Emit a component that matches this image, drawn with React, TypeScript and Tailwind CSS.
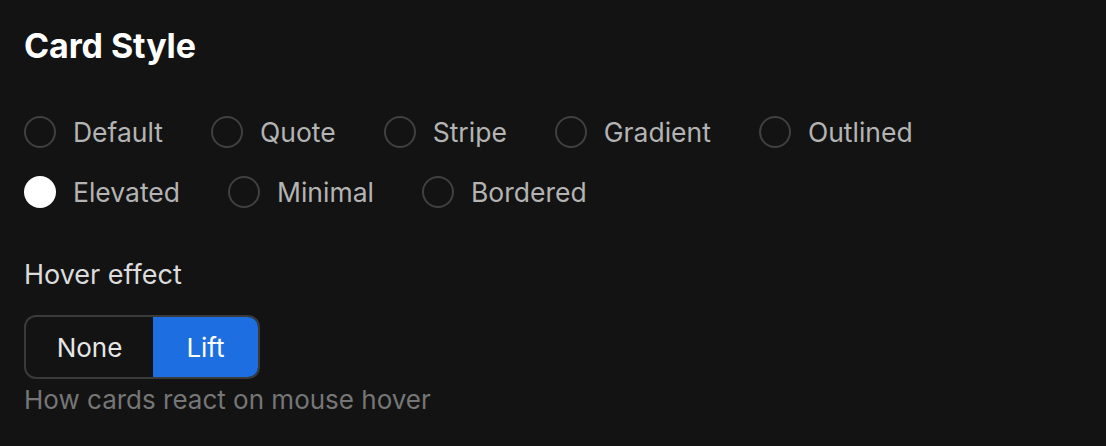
import React, { useState } from "react";

const options = ["Default", "Quote", "Stripe", "Gradient", "Outlined", "Elevated", "Minimal", "Bordered"];

export default function App() {
  const [selected, setSelected] = useState("Elevated");
  const [hover, setHover] = useState("Lift");
  return (
    <div
      className="min-h-[446px] w-full bg-[#131313] px-6 pt-[26px]"
      style={{ fontFamily: "Inter, 'Open Sans', sans-serif" }}
    >
      <h1 className="text-[34px] font-bold leading-[40px] text-white tracking-[-0.1px]">Card Style</h1>
      <div className="mt-[50px] flex flex-wrap gap-x-[48px] gap-y-[28px]">
        {options.map((o) => (
          <label key={o} className="flex h-8 cursor-pointer items-center gap-[17px]" onClick={() => setSelected(o)}>
            {selected === o ? (
              <span className="h-8 w-8 rounded-full bg-white" />
            ) : (
              <span className="h-8 w-8 rounded-full border-2 border-[#404040]" />
            )}
            <span className="text-[26.5px] leading-8 text-[#b4b4b4]">{o}</span>
          </label>
        ))}
      </div>
      <div className="mt-[51px] text-[27px] leading-8 text-[#dcdcdc]">Hover effect</div>
      <div className="mt-6 flex h-16 w-[236px] overflow-hidden rounded-xl border-2 border-[#3a3a3a]">
        {["None", "Lift"].map((h) => (
          <button
            key={h}
            onClick={() => setHover(h)}
            className={
              h === "None"
                ? `w-[127px] text-[26px] ${hover === h ? "bg-[#1d6ee0] text-white" : "text-[#e6e6e6]"}`
                : `flex-1 text-[26px] ${hover === h ? "bg-[#1d6ee0] text-white" : "text-[#e6e6e6]"}`
            }
          >
            {h}
          </button>
        ))}
      </div>
      <div className="mt-[5px] text-[26px] leading-8 text-[#767676]">How cards react on mouse hover</div>
    </div>
  );
}
